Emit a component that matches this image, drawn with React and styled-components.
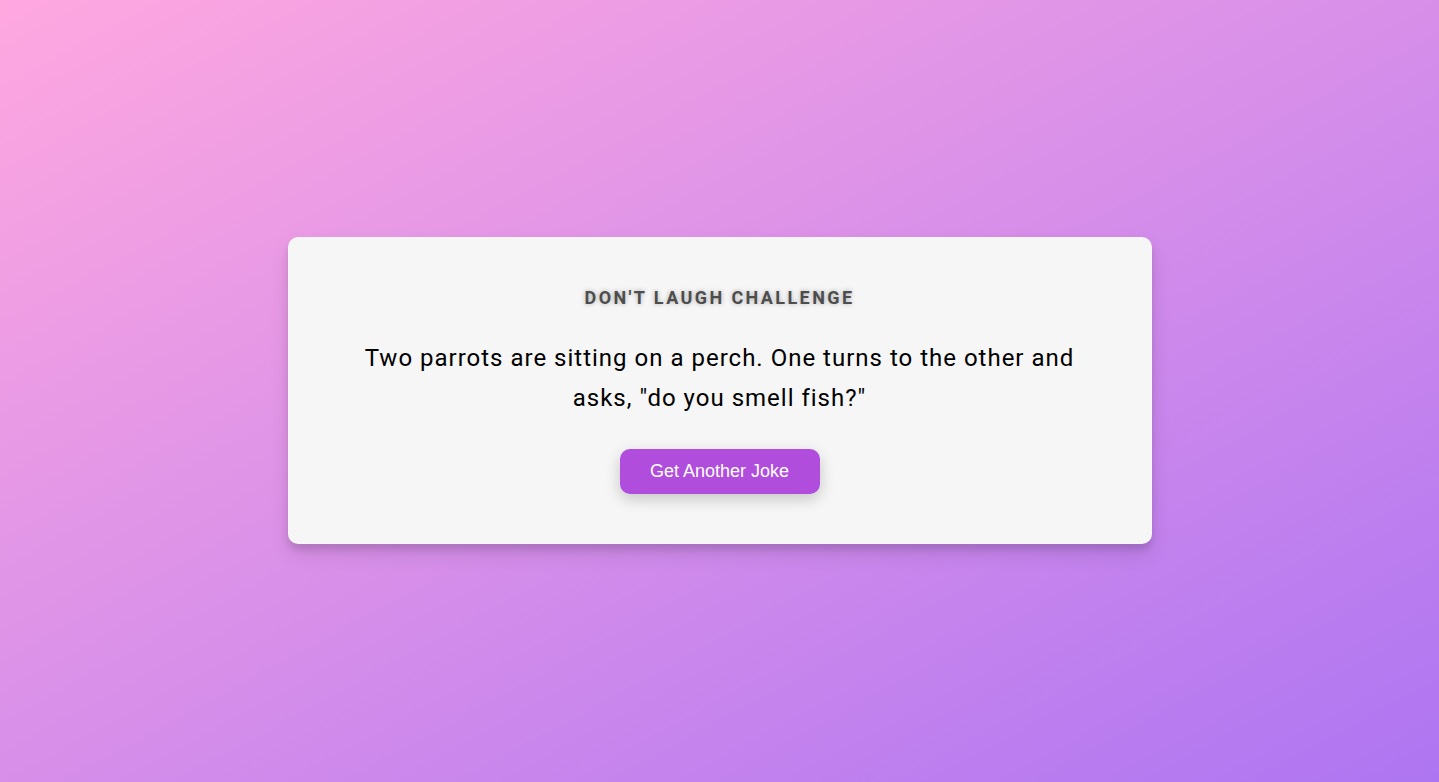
import React from "react";
import styled, { createGlobalStyle } from "styled-components";

const GlobalStyle = createGlobalStyle`
  * {
    box-sizing: border-box;
  }

  body {
    margin: 0;
    font-family: Roboto, "Liberation Sans", sans-serif;
  }
`;

function App() {
  return (
    <Page>
      <GlobalStyle />
      <Card>
        <Title>Don't Laugh Challenge</Title>
        <Joke>
          Two parrots are sitting on a perch. One turns to the other and asks,
          "do you smell fish?"
        </Joke>
        <Button>Get Another Joke</Button>
      </Card>
    </Page>
  );
}

const Page = styled.div`
  display: flex;
  align-items: center;
  justify-content: center;
  min-height: 782px;
  padding-bottom: 1px;
  background: linear-gradient(to bottom right, #ffa8e0, #ae75f2);
`;

const Card = styled.div`
  display: flex;
  flex-direction: column;
  align-items: center;
  width: 864px;
  padding: 51px 76px 50px;
  background-color: #f6f6f6;
  border-radius: 10px;
  box-shadow: 0 10px 20px rgba(0, 0, 0, 0.1), 0 6px 6px rgba(0, 0, 0, 0.1);
  text-align: center;
`;

const Title = styled.h3`
  margin: 0 0 31px;
  font-size: 18px;
  line-height: 19px;
  font-weight: 700;
  letter-spacing: 2.4px;
  text-transform: uppercase;
  color: #4d4d4d;
  text-shadow: 0 0 5px rgba(0, 0, 0, 0.3);
`;

const Joke = styled.p`
  margin: 0 0 31px;
  font-size: 24px;
  line-height: 40px;
  letter-spacing: 1px;
  color: #000;
`;

const Button = styled.button`
  width: 200px;
  height: 45px;
  border: 0;
  border-radius: 10px;
  background-color: #b04ddd;
  color: #fff;
  font-family: Arial, "Liberation Sans", sans-serif;
  font-size: 18px;
  box-shadow: 0 5px 15px rgba(0, 0, 0, 0.2);
  cursor: pointer;
`;

export default App;
